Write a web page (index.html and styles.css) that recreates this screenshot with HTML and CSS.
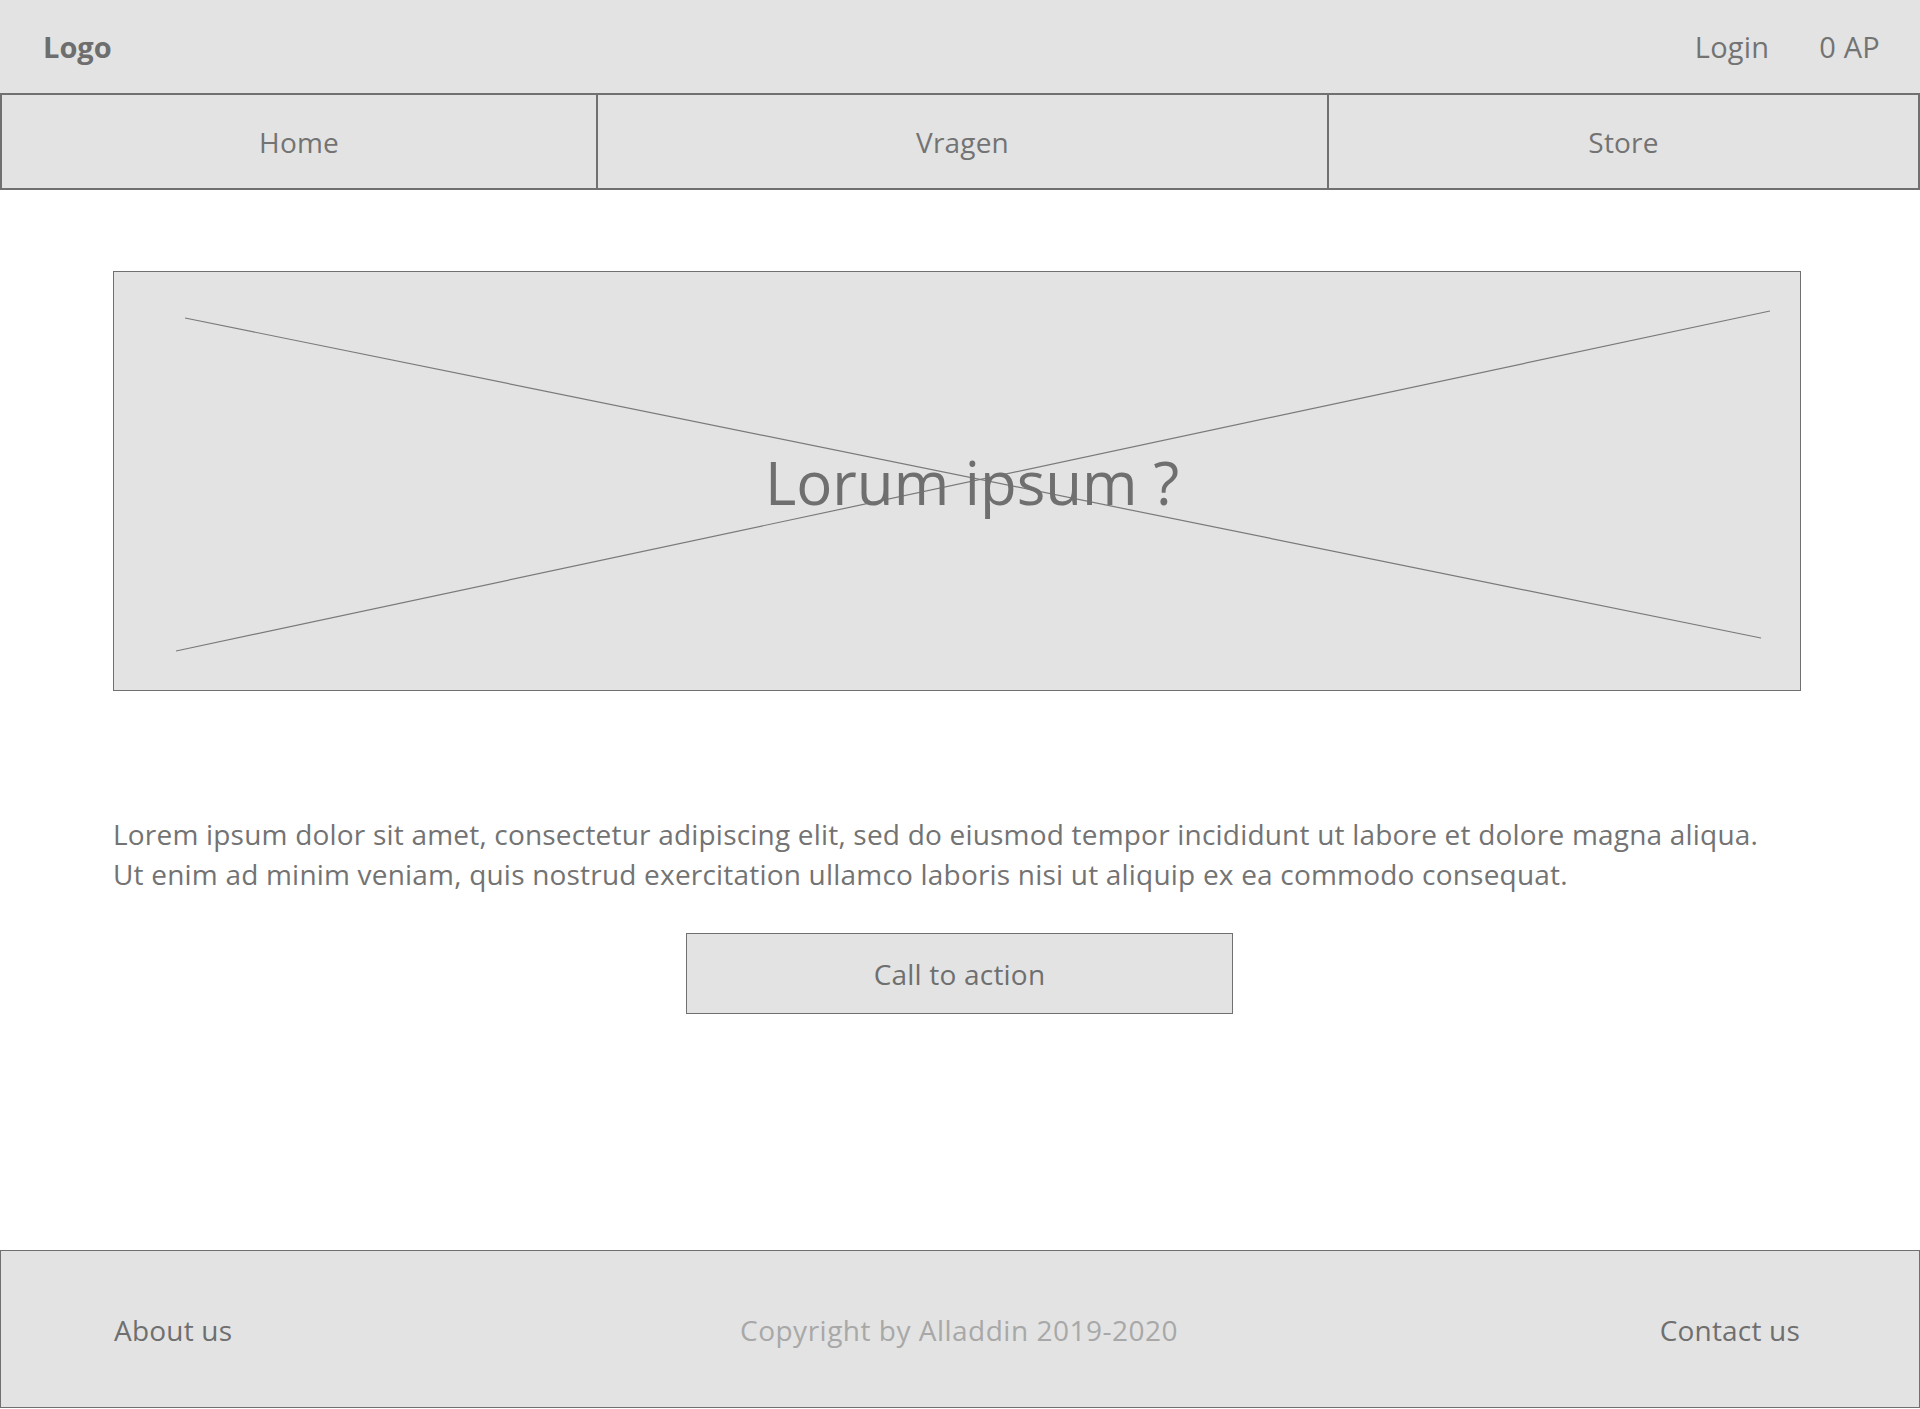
FILE: index.html
```html
<!DOCTYPE html>
<html lang="nl">
<head>
<meta charset="utf-8">
<title>Alladdin</title>
<link rel="stylesheet" href="styles.css">
</head>
<body>
<header class="topbar">
  <div class="logo">Logo</div>
  <div class="account">
    <a class="account-link" href="#">Login</a>
    <span class="points">0 AP</span>
  </div>
</header>
<nav class="mainnav">
  <a class="nav-item" href="#">Home</a>
  <a class="nav-item" href="#">Vragen</a>
  <a class="nav-item" href="#">Store</a>
</nav>
<main class="content">
  <section class="hero">
    <svg class="hero-x" viewBox="0 0 1685 418" preserveAspectRatio="none" aria-hidden="true">
      <line x1="71" y1="46" x2="1646" y2="366"/>
      <line x1="62" y1="379" x2="1655" y2="39"/>
    </svg>
    <h1 class="hero-title">Lorum ipsum ?</h1>
  </section>
  <p class="intro">Lorem ipsum dolor sit amet, consectetur adipiscing elit, sed do eiusmod tempor incididunt ut labore et dolore magna aliqua.<br>Ut enim ad minim veniam, quis nostrud exercitation ullamco laboris nisi ut aliquip ex ea commodo consequat.</p>
  <div class="cta-row">
    <a class="cta" href="#">Call to action</a>
  </div>
</main>
<footer class="footer">
  <a class="footer-link footer-left" href="#">About us</a>
  <span class="copyright">Copyright by Alladdin 2019-2020</span>
  <a class="footer-link footer-right" href="#">Contact us</a>
</footer>
</body>
</html>
```
FILE: styles.css
```css
* { box-sizing: border-box; }
html, body { margin: 0; padding: 0; }
body {
  background: #ffffff;
  color: #707070;
  font-family: "Open Sans", "Noto Sans", "Liberation Sans", sans-serif;
  width: 1920px;
  height: 1409px;
  overflow: hidden;
}
a { color: inherit; text-decoration: none; }

.topbar {
  height: 93px;
  background: #e3e3e3;
  display: flex;
  align-items: center;
  justify-content: space-between;
  padding: 0 40px 0 43px;
}
.logo {
  font-weight: 700;
  font-size: 29px;
  color: #6e6e6e;
}
.account {
  display: flex;
  align-items: center;
  gap: 50px;
  font-size: 29px;
  letter-spacing: 0.2px;
  color: #737373;
}

.mainnav {
  display: grid;
  grid-template-columns: 594px 731px 1fr;
  height: 97px;
  background: #e3e3e3;
  border: 2px solid #707070;
}
.nav-item {
  display: flex;
  align-items: center;
  justify-content: center;
  font-size: 28px;
  letter-spacing: 0.2px;
  color: #737373;
}
.nav-item + .nav-item { border-left: 2px solid #707070; }

.content {
  padding: 81px 119px 0 113px;
}
.hero {
  position: relative;
  height: 420px;
  background: #e3e3e3;
  border: 1px solid #707070;
  display: flex;
  align-items: center;
  justify-content: center;
}
.hero-x {
  position: absolute;
  inset: 0;
  width: 100%;
  height: 100%;
}
.hero-x line {
  stroke: #7a7a7a;
  stroke-width: 1.2;
}
.hero-title {
  position: relative;
  margin: 2px 0 0 30px;
  font-size: 60px;
  font-weight: 400;
  color: #6f6f6f;
}
.intro {
  margin: 123px 0 0;
  font-size: 28px;
  letter-spacing: 0.2px;
  line-height: 40px;
  color: #737373;
}
.cta-row {
  display: flex;
  justify-content: center;
  margin-top: 39px;
  padding-left: 5px;
}
.cta {
  width: 547px;
  height: 81px;
  display: flex;
  align-items: center;
  justify-content: center;
  background: #e3e3e3;
  border: 1px solid #707070;
  font-size: 28px;
  letter-spacing: 0.2px;
  color: #6f6f6f;
}

.footer {
  margin-top: 236px;
  height: 158px;
  background: #e3e3e3;
  border: 1px solid #707070;
  display: grid;
  grid-template-columns: 1fr auto 1fr;
  align-items: center;
  padding: 2px 119px 0 113px;
  font-size: 28px;
  letter-spacing: 0.2px;
}
.footer-link { color: #6f6f6f; }
.footer-left { justify-self: start; }
.footer-right { justify-self: end; }
.copyright {
  color: #a8a8a8;
  letter-spacing: 0.5px;
  margin-left: 4px;
}
```
